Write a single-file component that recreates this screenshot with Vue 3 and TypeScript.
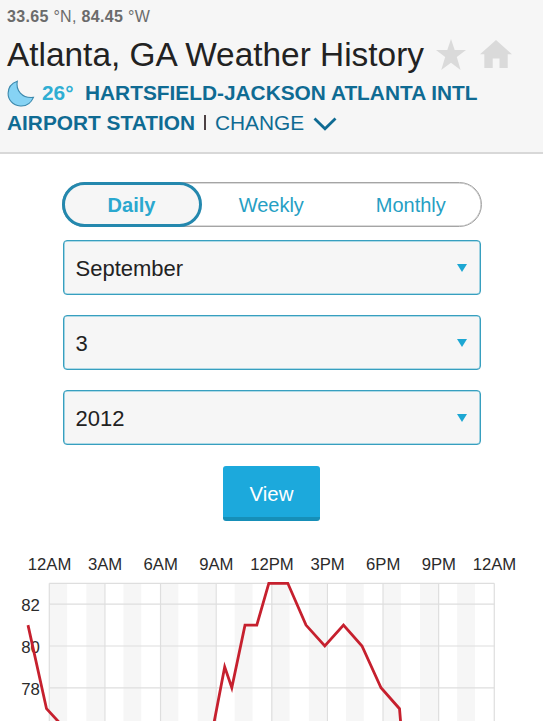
<script setup lang="ts">
import { ref } from 'vue'

const periods = ['Daily', 'Weekly', 'Monthly']
const activePeriod = ref('Daily')
const selections = ['September', '3', '2012']

const hours = ['12AM', '3AM', '6AM', '9AM', '12PM', '3PM', '6PM', '9PM', '12AM']
const left = 49.3
const hourWidth = 18.54
const top = 43.3
const degree = 20.9

const hourX = (hour: number): number => left + hour * hourWidth
const tempY = (temp: number): number => top + (83 - temp) * degree
const bands = Array.from({ length: 12 }, (_, i) => i * 2)
const ticks = [82, 80, 78]

const readings: [number, number][] = [
  [28, 81], [46.5, 77], [60, 76.3], [200, 73], [214.3, 76.4], [224.7, 79], [231.8, 78],
  [245, 81], [256.8, 81], [268.8, 83], [287.8, 83], [306, 81], [324.8, 80],
  [343.5, 81], [362, 80], [381, 78], [399.5, 77], [403, 75],
]
const line = readings.map(([x, t]) => `${x},${tempY(t).toFixed(1)}`).join(' ')
</script>

<template>
  <main class="page">
    <header class="header">
      <p class="coords"><b>33.65</b> °N, <b>84.45</b> °W</p>
      <div class="title-row">
        <h1>Atlanta, GA Weather History</h1>
        <svg class="star" viewBox="0 0 30 31" width="30" height="31">
          <path d="M15 0 L18.7 11 H30 L20.8 17.9 L24.6 31 L15 23.7 L5.2 31 L9.2 17.9 L0 11 H11.3 Z" />
        </svg>
        <svg class="home" viewBox="0 0 32 28" width="32" height="28">
          <path d="M16 0 L32 14.2 H27.7 V28 H19.5 V18.5 H12.7 V28 H4.3 V14.2 H0 Z" />
        </svg>
      </div>
      <div class="station-row">
        <svg class="moon" viewBox="0 0 28 28" width="28" height="28">
          <path d="M10.3 1.2 C8.5 10 14.8 18.7 26.5 17.4 C23.8 23.6 18.5 26.4 13.2 26 C6 25.4 1 20 1.1 13.3 C1.2 7.6 5 3 10.3 1.2 Z" />
        </svg>
        <span class="temp">26°</span>
        <span class="station">HARTSFIELD-JACKSON ATLANTA INTL</span>
      </div>
      <div class="station-row">
        <span class="station second">AIRPORT STATION</span>
        <span class="divider"></span>
        <a class="change">CHANGE</a>
        <svg class="chevron" viewBox="0 0 24 14" width="24" height="14">
          <path d="M1.5 1.5 L12 11.8 L22.5 1.5" />
        </svg>
      </div>
    </header>

    <section class="controls">
      <nav class="tabs">
        <button
          v-for="period in periods"
          :key="period"
          :class="['tab', { active: period === activePeriod }]"
          @click="activePeriod = period"
        >{{ period }}</button>
      </nav>
      <div v-for="value in selections" :key="value" class="select">
        <span>{{ value }}</span>
        <i class="arrow"></i>
      </div>
      <button class="view">View</button>
    </section>

    <svg class="chart" viewBox="0 0 543 181" width="543" height="181">
      <rect
        v-for="h in bands"
        :key="`b${h}`"
        class="band"
        :x="hourX(h)"
        :y="top"
        :width="17.8"
        height="140"
      />
      <line
        v-for="(_, i) in hours"
        :key="`v${i}`"
        class="grid"
        :x1="hourX(i * 3)"
        :x2="hourX(i * 3)"
        :y1="top"
        y2="181"
      />
      <line class="grid" :x1="left" :x2="hourX(24)" :y1="top" :y2="top" />
      <line
        v-for="t in ticks"
        :key="`h${t}`"
        class="grid"
        :x1="left"
        :x2="hourX(24)"
        :y1="tempY(t)"
        :y2="tempY(t)"
      />
      <text v-for="(label, i) in hours" :key="`l${i}`" class="hour" :x="hourX(i * 3) + 0.2" y="29.6">{{ label }}</text>
      <text v-for="t in ticks" :key="`t${t}`" class="tick" x="39.8" :y="tempY(t) + 6.8">{{ t }}</text>
      <polyline class="series" :points="line" />
    </svg>
  </main>
</template>

<style>
body {
  margin: 0;
  background: #fff;
  overflow: hidden;
}
</style>

<style scoped>
.page {
  width: 543px;
  height: 721px;
  overflow: hidden;
  background: #fff;
  font-family: "Liberation Sans", Arial, sans-serif;
  color: #222;
}
.header {
  box-sizing: border-box;
  height: 154px;
  padding: 6px 7px 0;
  background: #f6f6f6;
  border-bottom: 2px solid #d8d8d8;
}
.coords {
  margin: 0;
  font-size: 16px;
  line-height: 21px;
  letter-spacing: 0.32px;
  color: #6b6b6b;
}
.title-row {
  display: flex;
  align-items: center;
  height: 52px;
}
h1 {
  margin: 0;
  padding-top: 3px;
  width: 429px;
  font-size: 33.4px;
  font-weight: 400;
  line-height: 49px;
  white-space: nowrap;
}
.star,
.home {
  flex: none;
  margin-top: 3px;
  fill: #dadada;
}
.home {
  margin-top: 2px;
  margin-left: 14px;
}
.station-row {
  display: flex;
  align-items: center;
  height: 28px;
  font-size: 20.85px;
  white-space: nowrap;
}
.station-row + .station-row {
  height: 31px;
}
.moon {
  margin-top: 1px;
  margin-right: 7px;
  fill: #86d3f4;
  stroke: #3b88ac;
  stroke-width: 1.1;
}
.temp {
  width: 43px;
  font-weight: 700;
  color: #2faed3;
}
.station {
  font-weight: 700;
  color: #0f6b93;
}
.divider {
  width: 2px;
  height: 15px;
  margin: 0 9px 0 9px;
  background: #4d4144;
}
.change {
  color: #0f6b93;
}
.chevron {
  margin: 3px 0 0 9px;
  fill: none;
  stroke: #0f6b93;
  stroke-width: 2.8;
}
.controls {
  display: flex;
  flex-direction: column;
  align-items: center;
  padding-top: 28px;
}
.tabs {
  box-sizing: border-box;
  display: flex;
  width: 420px;
  height: 45px;
  border: 1px solid #a5a5a5;
  box-shadow: inset 0 0 0 0.5px #b5b5b5;
  border-radius: 23px;
  margin-bottom: 13px;
}
.tab {
  flex: 1;
  padding: 2px 0 0;
  border: 0;
  background: none;
  font: 400 20px "Liberation Sans", Arial, sans-serif;
  color: #269fc4;
}
.tab.active {
  flex: none;
  width: 140px;
  margin: -1px 0 -1px -1px;
  border: 3px solid #2488ae;
  border-radius: 23px;
  background: #f6f6f6;
  font-weight: 700;
  color: #2ba8cf;
}
.select {
  box-sizing: border-box;
  display: flex;
  align-items: center;
  justify-content: space-between;
  width: 418px;
  height: 55px;
  margin-bottom: 20px;
  padding: 3px 13px 0 12px;
  border: 1px solid #379fbf;
  box-shadow: inset 0 0 0 0.6px #6bbdd6;
  border-radius: 4px;
  background: #f6f6f6;
  font-size: 22px;
}
.arrow {
  border: 5.5px solid transparent;
  border-top: 8px solid #1da7d3;
  border-bottom: 0;
  margin-top: -3px;
}
.view {
  box-sizing: border-box;
  width: 97px;
  height: 55px;
  margin-top: 1px;
  padding: 5px 0 0;
  border: 0;
  border-bottom: 4px solid #168fb8;
  border-radius: 3px;
  background: #1ca9dc;
  color: #fff;
  font: 400 20.4px "Liberation Sans", Arial, sans-serif;
}
.chart {
  display: block;
  margin-top: 19px;
}
.band {
  fill: #f6f6f6;
}
.grid {
  stroke: #dedede;
  stroke-width: 1.2;
}
.hour {
  font-size: 16.7px;
  text-anchor: middle;
  fill: #2b2b2b;
}
.tick {
  font-size: 16.8px;
  text-anchor: end;
  fill: #2b2b2b;
}
.series {
  fill: none;
  stroke: #c6202e;
  stroke-width: 2.8;
}
</style>
